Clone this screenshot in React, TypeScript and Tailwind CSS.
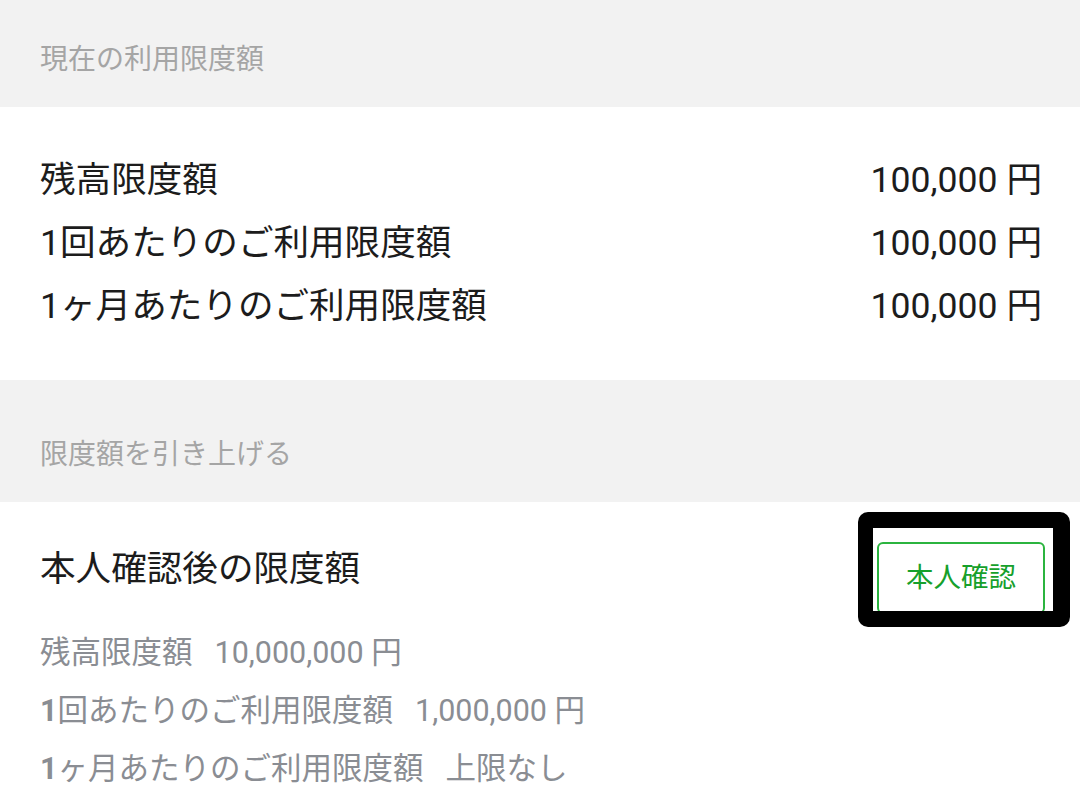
import * as React from 'react';

const font = { fontFamily: 'Roboto, "Noto Sans CJK JP", sans-serif' };

const limits = [
  { label: '残高限度額', value: '100,000 円' },
  { label: '1回あたりのご利用限度額', value: '100,000 円' },
  { label: '1ヶ月あたりのご利用限度額', value: '100,000 円' },
];

const afterLimits = [
  { label: '残高限度額', value: '10,000,000 円' },
  { label: '1回あたりのご利用限度額', value: '1,000,000 円' },
  { label: '1ヶ月あたりのご利用限度額', value: '上限なし' },
];

// leading "1" renders bolder in the reference
const SubLabel: React.FC<{ text: string }> = ({ text }) =>
  text.startsWith('1') ? (
    <span>
      <span className="font-bold">1</span>
      {text.slice(1)}
    </span>
  ) : (
    <span>{text}</span>
  );

const App: React.FC = () => {
  return (
    <div className="w-[1080px] h-[801px] bg-white overflow-hidden" style={font}>
      <div className="h-[107px] bg-[#f2f2f2] flex items-center pt-[12px] px-[40px]">
        <h2 className="text-[28px] text-[#a5a5a5] leading-none">現在の利用限度額</h2>
      </div>

      <div className="py-[42px] pl-[40px] pr-[38px]">
        {limits.map((row) => (
          <div key={row.label} className="flex justify-between text-[35.6px] leading-[63px] text-[#1c1c1c]">
            <span>{row.label}</span>
            <span>{row.value}</span>
          </div>
        ))}
      </div>

      <div className="h-[122px] bg-[#f2f2f2] flex items-center pt-[28px] px-[40px]">
        <h2 className="text-[28px] text-[#a5a5a5] leading-none">限度額を引き上げる</h2>
      </div>

      <div className="pt-[10px] pl-[40px] pr-[10px]">
        <div className="flex justify-between items-start">
          <div className="mt-[26px] text-[35.6px] leading-[63px] text-[#1c1c1c]">本人確認後の限度額</div>
          <div className="relative w-[212px] h-[115px] overflow-hidden">
            <button className="ml-[19px] mt-[30px] w-[168px] h-[72px] border-2 border-[#2bb43f] rounded-[6px] bg-white text-[27.5px] text-[#16a02b] flex items-center justify-center">
              本人確認
            </button>
            <div className="absolute inset-0 border-y-[16px] border-l-[15px] border-r-[17px] border-black rounded-[10px] pointer-events-none" />
          </div>
        </div>
        <div className="-mt-[3px] text-[30.5px] leading-[58px] text-[#8a8d93]">
          {afterLimits.map((row) => (
            <div key={row.label} className="flex gap-[22px]">
              <SubLabel text={row.label} />
              <span>{row.value}</span>
            </div>
          ))}
        </div>
      </div>
    </div>
  );
};

export default App;
